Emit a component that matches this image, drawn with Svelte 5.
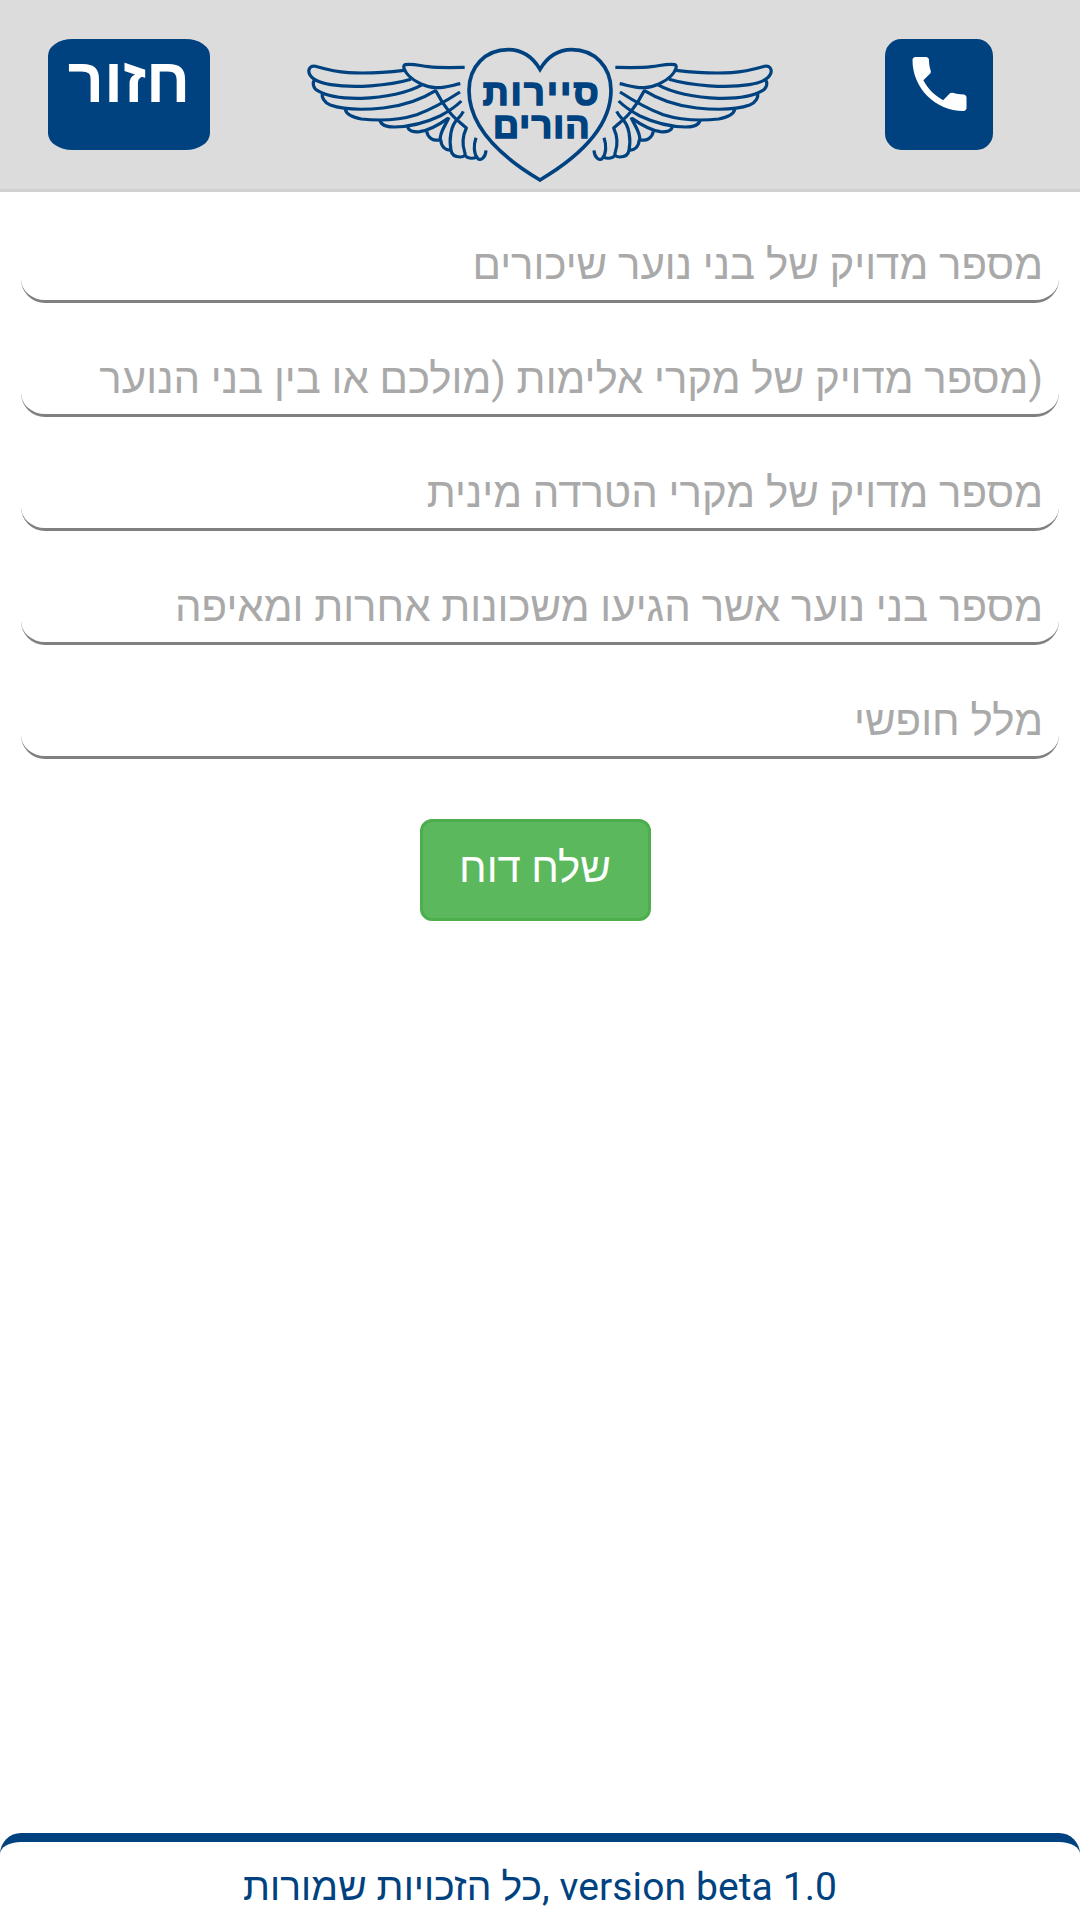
<script>
  // Isolated RTL run followed by a closing bracket that stays in the LTR context
  const fields = [
    'מספר מדויק של בני נוער שיכורים',
    '\u2067מספר מדויק של מקרי אלימות (מולכם או בין בני הנוער\u2069)',
    'מספר מדויק של מקרי הטרדה מינית',
    'מספר בני נוער אשר הגיעו משכונות אחרות ומאיפה',
    'מלל חופשי'
  ];
</script>

<div class="page">
  <header>
    <button class="back">חזור</button>
    <svg class="logo" viewBox="0 0 1440 450" aria-label="סיירות הורים">
      <defs>
        <g id="wing">
          <path d="M312 91C270 96 200 101 145 98C100 95 68 85 47 79C31 75 23 88 28 101C35 119 62 129 92 134C160 145 265 138 333 118" />
          <path d="M45 119C35 127 40 145 53 152C80 169 130 176 184 175C255 173 325 158 367 134" />
          <path d="M68 159C63 171 73 188 91 195C130 209 190 210 250 204C320 196 370 175 408 151" />
          <path d="M136 208C138 222 157 232 184 237C240 243 305 238 350 224C390 210 440 182 480 156" />
          <path d="M240 241C243 255 262 261 283 261C335 260 382 246 420 228C446 214 466 201 484 183" />
          <path d="M324 260C323 272 341 277 359 275C392 270 420 252 444 235" />
          <path d="M380 274C383 293 399 305 421 299C418 278 436 257 447 232" />
          <path d="M422 299C424 320 435 332 453 330C447 302 451 255 474 236C480 230 485 224 490 214" />
          <path d="M453 331C455 346 466 351 481 351C492 351 498 346 494 336C485 310 488 288 499 264C480 247 462 234 450 218C432 196 420 178 406 150" />
          <path d="M494 346C505 357 521 357 530 350" />
          <path d="M528 293C520 316 521 341 533 355C542 365 557 351 558 331" />
          <path d="M494 82C450 83 420 84 385 80C354 76 335 70 315 74C307 78 313 94 327 108C345 126 379 142 407 143C436 144 456 136 481 131" />
        </g>
      </defs>
      <g class="lines">
        <use href="#wing" />
        <use href="#wing" transform="translate(1440 0) scale(-1 1)" />
        <path class="heart" d="M720 88C698 51 667 29 625 29C556 29 507 80 507 151C507 263 607 353 720 420C833 353 933 263 933 151C933 80 884 29 815 29C773 29 742 51 720 88Z" />
      </g>
      <text x="722" y="195" textLength="348">סיירות</text>
      <text x="724" y="295" textLength="290">הורים</text>
    </svg>
    <button class="call" aria-label="Call">
      <svg viewBox="3 3 18 18"><path d="M6.62 10.79c1.44 2.83 3.76 5.14 6.59 6.59l2.2-2.2c.27-.27.67-.36 1.02-.24 1.12.37 2.33.57 3.57.57.55 0 1 .45 1 1V20c0 .55-.45 1-1 1-9.39 0-17-7.61-17-17 0-.55.45-1 1-1h3.5c.55 0 1 .45 1 1 0 1.25.2 2.45.57 3.57.11.35.03.74-.25 1.02l-2.2 2.2z" /></svg>
    </button>
  </header>

  <main>
    {#each fields as label}
      <div class="field"><span>{label}</span></div>
    {/each}
    <button class="send">שלח דוח</button>
  </main>

  <footer><span dir="ltr">כל הזכויות שמורות, version beta 1.0</span></footer>
</div>

<style>
  :global(body) {
    margin: 0;
    background: #fff;
  }
  .page {
    height: 1920px;
    display: flex;
    flex-direction: column;
    font-family: Roboto, 'Liberation Sans', sans-serif;
    overflow: hidden;
  }
  button {
    font-family: inherit;
    margin: 0;
    padding: 0;
    border: 0;
    box-sizing: border-box;
    color: #fff;
  }
  header {
    box-sizing: border-box;
    height: 192px;
    flex: none;
    display: flex;
    align-items: flex-start;
    justify-content: space-between;
    padding: 39px 87px 0 48px;
    background: #dcdcdc;
    border-bottom: 3px solid #d0d0d0;
  }
  .back,
  .call,
  .send {
    display: flex;
    justify-content: center;
    align-items: flex-start;
  }
  .back,
  .call {
    height: 111px;
    background: #00427f;
    border-radius: 15%;
  }
  .back {
    width: 162px;
    padding: 3px 0 0;
    font-size: 63px;
    line-height: 77px;
    font-weight: 700;
  }
  .call {
    width: 108px;
    padding-top: 18px;
  }
  .call svg {
    width: 55px;
    height: 54px;
    fill: #fff;
  }
  .logo {
    width: 480px;
    height: 150px;
    margin: 1px 15px 0 0;
  }
  .lines {
    fill: none;
    stroke: #00427f;
    stroke-width: 9.5;
    stroke-linejoin: round;
  }
  .heart {
    stroke-width: 11;
    stroke-linejoin: miter;
  }
  .logo text {
    fill: #00427f;
    stroke: #00427f;
    stroke-width: 5;
    font-family: 'Liberation Sans', sans-serif;
    font-size: 108px;
    font-weight: 700;
    text-anchor: middle;
  }
  main {
    flex: 1;
    display: flex;
    flex-direction: column;
    padding: 24px 21px 0;
  }
  .field {
    box-sizing: border-box;
    height: 87px;
    margin-bottom: 27px;
    border-bottom: 3px solid #808080;
    border-radius: 24px;
    padding: 19px 16px 0;
    text-align: right;
    white-space: nowrap;
    color: #a9a9a9;
    font-size: 42px;
    line-height: 60px;
    word-spacing: 0.3px;
  }
  .send {
    width: 231px;
    height: 102px;
    margin: 33px 0 0 399px;
    padding: 16px 1px 0 0;
    background: #5cb85c;
    border: 3px solid #4cae4c;
    border-radius: 12px;
    font-size: 42px;
    line-height: 60px;
  }
  footer {
    box-sizing: border-box;
    height: 87px;
    flex: none;
    border-top: 9px solid #00427f;
    border-radius: 21px 21px 0 0;
    padding-top: 19px;
    text-align: center;
    color: #00427f;
    font-size: 39px;
    line-height: 52px;
    letter-spacing: 0.1px;
    white-space: nowrap;
  }
</style>
